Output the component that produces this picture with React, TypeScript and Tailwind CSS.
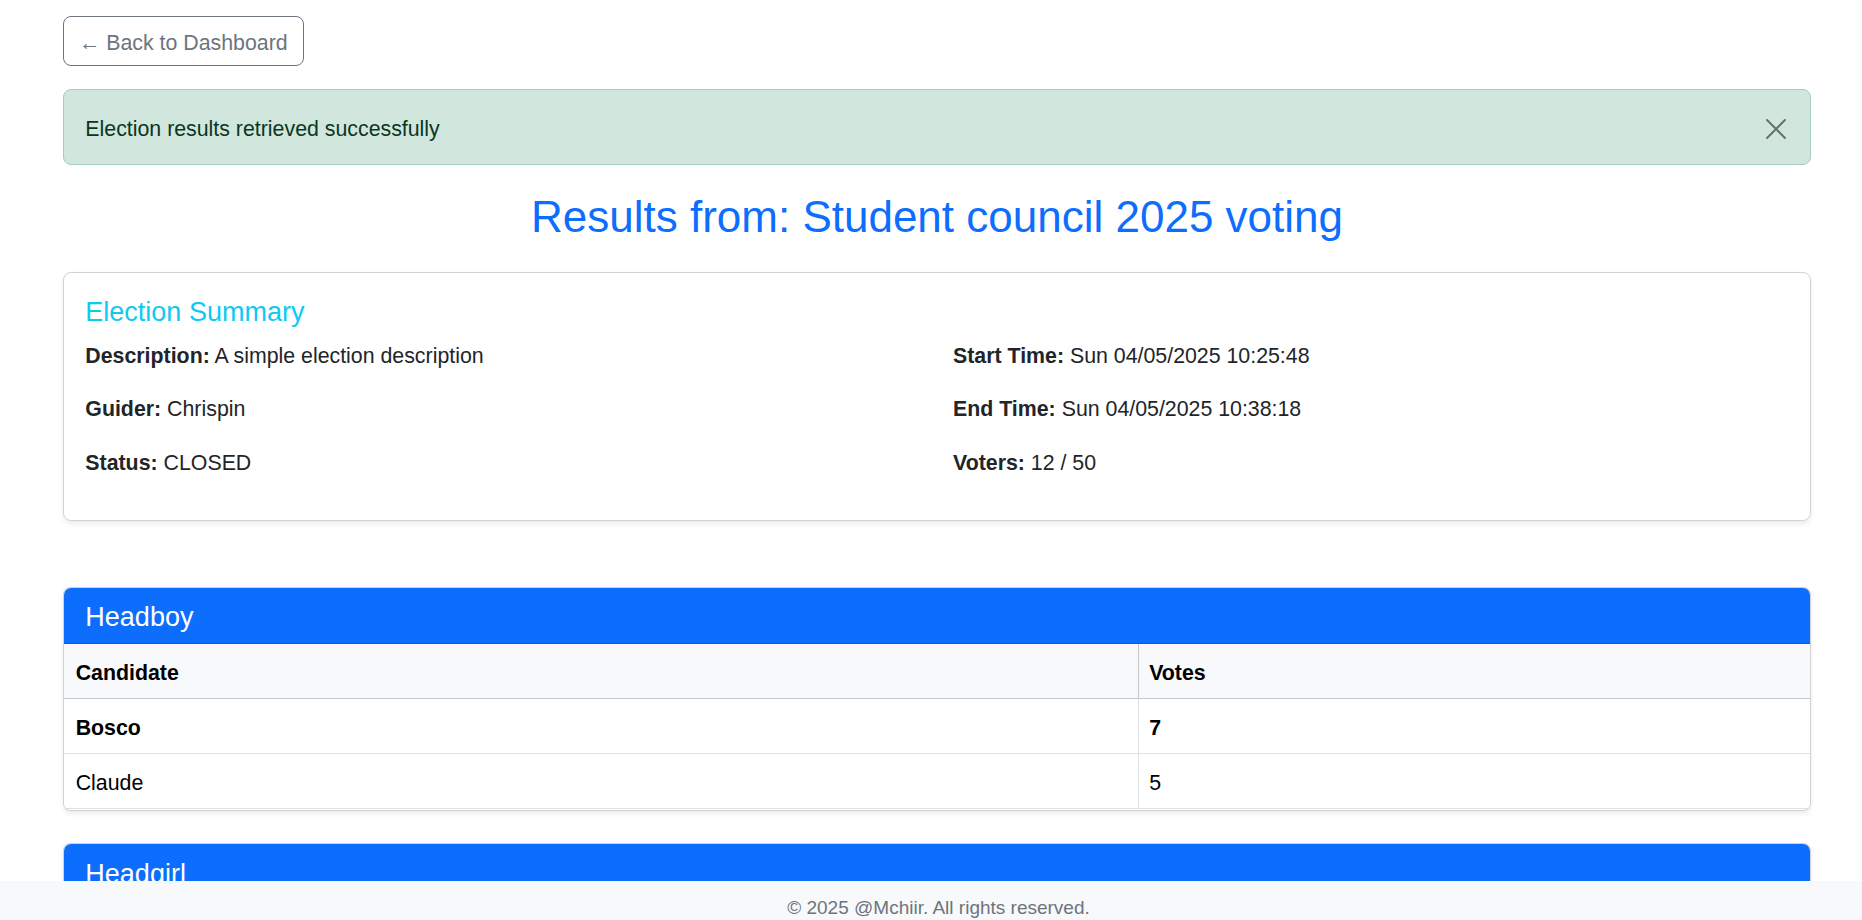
import React from "react";

const font = { fontFamily: '"Liberation Sans", Arial, sans-serif' };

function CloseIcon() {
  return (
    <svg width="22" height="22" viewBox="0 0 16 16" className="opacity-50">
      <path d="M1.5 1.5 L14.5 14.5 M14.5 1.5 L1.5 14.5" stroke="#000" strokeWidth="1.5" strokeLinecap="round" fill="none" />
    </svg>
  );
}

type Row = { name: string; votes: number; bold?: boolean };

function PositionCard({ title, rows, className }: { title: string; rows: Row[]; className?: string }) {
  return (
    <div className={"rounded-[8px] border border-[rgba(0,0,0,0.175)] shadow-[0_2.67px_5.33px_rgba(0,0,0,0.075)] overflow-hidden bg-white pb-[1.5px] " + (className ?? "")}>
      <div className="bg-[#0d6efd] text-white pl-[21.33px] pt-[13.5px] pb-[9.7px] border-b border-[rgba(0,0,0,0.175)] text-[27px] leading-[32px]">
        {title}
      </div>
      <table className="w-full border-collapse text-black text-[21.33px] leading-[32px]">
        <thead>
          <tr className="bg-[#f8f9fa]">
            <th className="w-[1074px] text-left font-bold pl-[11.67px] pr-[10.67px] pt-[13px] pb-[9px] border-b border-r border-[#c6c7c8]">Candidate</th>
            <th className="text-left font-bold px-[10.67px] pt-[13px] pb-[9px] border-b border-[#c6c7c8]">Votes</th>
          </tr>
        </thead>
        <tbody>
          {rows.map((r) => (
            <tr key={r.name} className="bg-white">
              <td className={"pl-[11.67px] pr-[10.67px] pt-[13px] pb-[9px] border-b border-r border-[#dee2e6] " + (r.bold ? "font-bold" : "")}>{r.name}</td>
              <td className={"px-[10.67px] pt-[13px] pb-[9px] border-b border-[#dee2e6] " + (r.bold ? "font-bold" : "")}>{r.votes}</td>
            </tr>
          ))}
        </tbody>
      </table>
    </div>
  );
}

function Field({ label, value }: { label: string; value: string }) {
  return (
    <div className="leading-[32px]">
      <span className="font-bold">{label}</span> {value}
    </div>
  );
}

export default function App() {
  return (
    <div style={font} className="relative h-[920px] overflow-hidden bg-white text-[#212529] text-[21.33px]">
      <div className="ml-[63px] w-[1748px] pt-[16px]">
        <button className="h-[50px] pl-[15px] pr-[15px] pt-[9.5px] pb-[6.5px] border border-[#6c757d] rounded-[8px] text-[#6c757d] text-[21.33px] leading-[32px]">
          ← Back to Dashboard
        </button>

        <div className="mt-[23px] flex items-center justify-between rounded-[8px] border border-[#a3cfbb] bg-[#d1e7dd] text-[#0a3622] pl-[21.33px] pr-[23px] pt-[23px] pb-[19px] leading-[32px]">
          <span>Election results retrieved successfully</span>
          <CloseIcon />
        </div>

        <h2 className="mt-[25.5px] mb-[29.5px] text-center text-[#0d6efd] text-[44px] leading-[52px]">
          Results from: Student council 2025 voting
        </h2>

        <div className="rounded-[8px] border border-[rgba(0,0,0,0.175)] shadow-[0_2.67px_5.33px_rgba(0,0,0,0.075)] px-[21.33px] pt-[23px] pb-[41px]">
          <h5 className="text-[#0dcaf0] text-[27px] leading-[32px] mb-[12px]">Election Summary</h5>
          <div className="grid grid-cols-2 gap-x-[32px]">
            <div className="flex flex-col gap-[21.33px]">
              <Field label="Description:" value="A simple election description" />
              <Field label="Guider:" value="Chrispin" />
              <Field label="Status:" value="CLOSED" />
            </div>
            <div className="flex flex-col gap-[21.33px]">
              <Field label="Start Time:" value="Sun 04/05/2025 10:25:48" />
              <Field label="End Time:" value="Sun 04/05/2025 10:38:18" />
              <Field label="Voters:" value="12 / 50" />
            </div>
          </div>
        </div>

        <PositionCard
          className="mt-[66px]"
          title="Headboy"
          rows={[
            { name: "Bosco", votes: 7, bold: true },
            { name: "Claude", votes: 5 },
          ]}
        />

        <PositionCard
          className="mt-[32px]"
          title="Headgirl"
          rows={[
            { name: "Alice", votes: 8, bold: true },
            { name: "Diane", votes: 4 },
          ]}
        />
      </div>

      <footer className="fixed bottom-0 left-0 right-0 h-[39px] bg-[#f8f9fa] text-center text-[#6c757d] text-[19px] leading-[28px] pt-[12.5px] pl-[15px]">
        © 2025 @Mchiir. All rights reserved.
      </footer>
    </div>
  );
}
